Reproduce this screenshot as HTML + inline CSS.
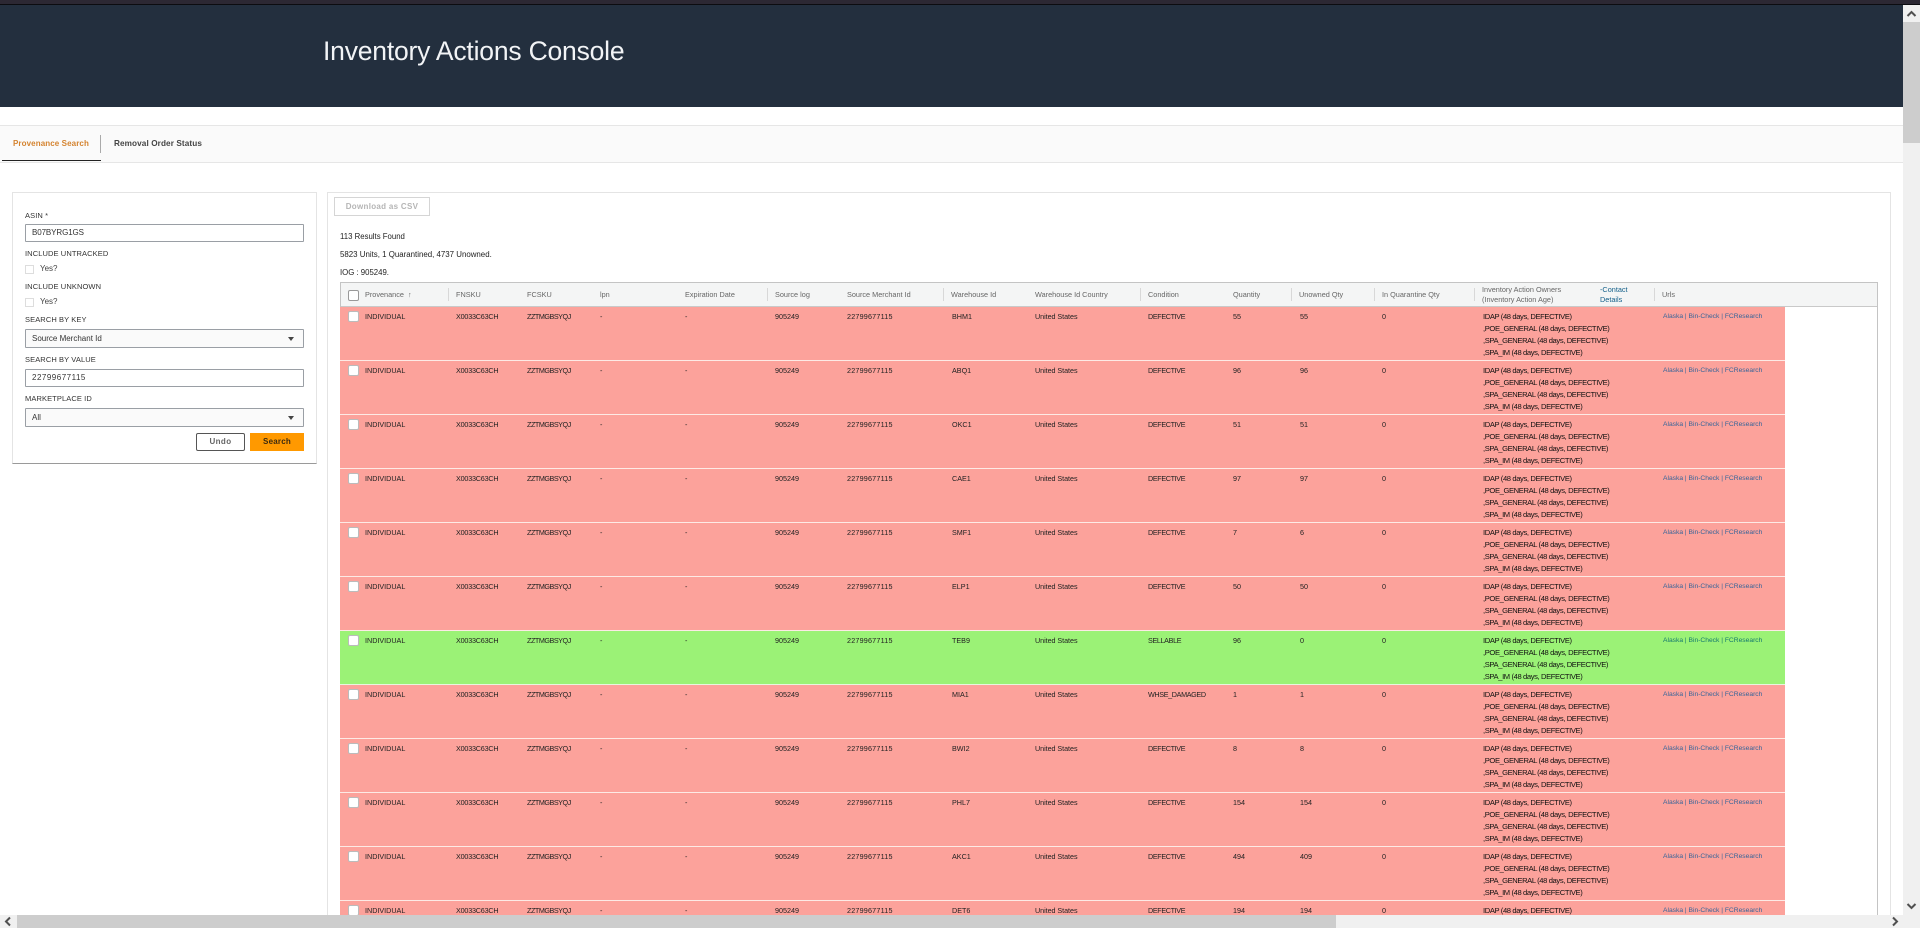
<!DOCTYPE html>
<html lang="en"><head><meta charset="utf-8"><title>Inventory Actions Console</title>
<style>
html,body{margin:0;padding:0;background:#fff;width:1920px;height:928px;overflow:hidden;font-family:"Liberation Sans",sans-serif}
div,span,i,b,a,u{position:absolute;white-space:nowrap;font-style:normal;font-weight:normal;text-decoration:none;display:block}
#w{left:0;top:0;width:1920px;height:928px;overflow:hidden;background:#fff}
.l{left:25px;font-size:7.5px;color:#333;letter-spacing:.1px;line-height:10px}
.in{left:25px;width:277px;height:16px;border:1px solid #9a9fa5;border-radius:1px;background:#fff;font-size:8px;line-height:16px;color:#333;text-indent:6px}
.sel{height:17px;line-height:17px;background:#fafafa}
.ck{left:25px;width:7px;height:7px;border:1px solid #ddd;background:#fff}
.y{left:40px;font-size:8px;color:#444;line-height:10px}
.tri{left:288px;width:0;height:0;border-left:3px solid transparent;border-right:3px solid transparent;border-top:4px solid #444}
.h{top:283px;font-size:7.3px;color:#666;line-height:24px}
.sep{top:288px;width:1px;height:13px;background:#d8d8d8}
.r{left:340px;width:1445px;height:53px;background:#fca29b;border-bottom:1px solid #fdeae5}
.g{background:#9bf276;border-bottom-color:#e6f7de}
.r span{top:5px;font-size:7.2px;line-height:10px;color:#222}
.r i{left:8px;top:4px;width:9px;height:9px;background:#fff;border:1px solid #bbb;border-radius:2px}
.c1{left:25px}.c2{left:116px;letter-spacing:-.2px}.c3{left:187px;letter-spacing:-.45px}.c4{left:260px}.c5{left:345px}.c6{left:435px}.c7{left:507px;letter-spacing:.2px}.c8{left:612px}.c9{left:695px;letter-spacing:-.05px}.c10{left:808px;letter-spacing:-.35px}.c11{left:893px}.c12{left:960px}.c13{left:1042px}
.r .o{left:1143px;top:4px;font-size:7.6px;letter-spacing:-.38px;line-height:12px;color:#111}
.r .u{left:1323px;color:#36659a;font-size:6.7px}
.g .u{color:#15796e}
</style></head><body>
<div id="w">
<div style="left:0;top:0;width:1920px;height:4px;background:#2c2833"></div>
<div style="left:0;top:4px;width:1920px;height:1px;background:#0c0c10"></div>
<div style="left:0;top:5px;width:1903px;height:102px;background:#232f3e"></div>
<div style="left:323px;top:36px;font-size:26.5px;line-height:30px;color:#f2f4f6;letter-spacing:-.2px">Inventory Actions Console</div>

<div style="left:0;top:125px;width:1903px;height:36px;background:#fafafa;border-top:1px solid #e6e6e6;border-bottom:1px solid #e6e6e6"></div>
<div style="left:13px;top:139px;font-size:8px;line-height:10px;color:#d4832f;letter-spacing:.1px"><b style="position:static;font-weight:bold;color:#d4832f">Provenance Search</b></div>
<div style="left:2px;top:160px;width:99px;height:1px;background:#222"></div>
<div style="left:100px;top:135px;width:1px;height:18px;background:#aaa"></div>
<div style="left:114px;top:139px;font-size:8.2px;line-height:10px;color:#444;letter-spacing:.1px"><b style="position:static;font-weight:bold">Removal Order Status</b></div>

<!-- left panel -->
<div style="left:12px;top:192px;width:303px;height:270px;border:1px solid #e4e4e4;border-bottom:1px solid #9a9a9a"></div>
<div class="l" style="top:211px">ASIN *</div>
<div class="in" style="top:224px;letter-spacing:-.1px">B07BYRG1GS</div>
<div class="l" style="top:249px">INCLUDE UNTRACKED</div>
<div class="ck" style="top:265px"></div><div class="y" style="top:264px">Yes?</div>
<div class="l" style="top:282px">INCLUDE UNKNOWN</div>
<div class="ck" style="top:298px"></div><div class="y" style="top:297px">Yes?</div>
<div class="l" style="top:315px">SEARCH BY KEY</div>
<div class="in sel" style="top:329px">Source Merchant Id</div><div class="tri" style="top:337px"></div>
<div class="l" style="top:355px">SEARCH BY VALUE</div>
<div class="in" style="top:369px;letter-spacing:.5px">22799677115</div>
<div class="l" style="top:394px">MARKETPLACE ID</div>
<div class="in sel" style="top:408px">All</div><div class="tri" style="top:416px"></div>
<div style="left:196px;top:433px;width:47px;height:16px;border:1px solid #555;border-radius:2px;background:#fff;text-align:center;font-size:8px;line-height:16px;color:#666;letter-spacing:.4px"><b style="position:static;font-weight:bold">Undo</b></div>
<div style="left:250px;top:433px;width:54px;height:18px;background:#f90;text-align:center;font-size:8px;line-height:18px;color:#3b2a10;letter-spacing:.2px"><b style="position:static;font-weight:bold">Search</b></div>

<!-- right panel -->
<div style="left:327px;top:192px;width:1562px;height:735px;border:1px solid #e4e4e4"></div>
<div style="left:334px;top:197px;width:94px;height:17px;border:1px solid #d5d5d5;text-align:center;font-size:8px;line-height:17px;color:#b5b5b5;letter-spacing:.3px"><b style="position:static;font-weight:bold">Download as CSV</b></div>
<div style="left:340px;top:232px;font-size:7.8px;line-height:10px;color:#222">113 Results Found</div>
<div style="left:340px;top:250px;font-size:7.9px;line-height:10px;color:#222">5823 Units, 1 Quarantined, 4737 Unowned.</div>
<div style="left:340px;top:268px;font-size:7.8px;line-height:10px;color:#222">IOG : 905249.</div>

<!-- table -->
<div style="left:340px;top:282px;width:1536px;height:644px;border:1px solid #c4c4c4"></div>
<div style="left:341px;top:283px;width:1536px;height:23px;background:#f4f5f5;border-bottom:1px solid #c9c9c9"></div>
<div style="left:348px;top:290px;width:9px;height:9px;background:#fff;border:1px solid #999;border-radius:2px"></div>
<div class="h" style="left:365px">Provenance &nbsp;&#8593;</div><div class="sep" style="left:448px"></div>
<div class="h" style="left:456px">FNSKU</div>
<div class="h" style="left:527px">FCSKU</div>
<div class="h" style="left:600px">lpn</div>
<div class="h" style="left:685px">Expiration Date</div><div class="sep" style="left:767px"></div>
<div class="h" style="left:775px">Source log</div>
<div class="h" style="left:847px">Source Merchant Id</div><div class="sep" style="left:943px"></div>
<div class="h" style="left:951px">Warehouse Id</div>
<div class="h" style="left:1035px">Warehouse Id Country</div><div class="sep" style="left:1140px"></div>
<div class="h" style="left:1148px">Condition</div>
<div class="h" style="left:1233px">Quantity</div><div class="sep" style="left:1291px"></div>
<div class="h" style="left:1299px">Unowned Qty</div><div class="sep" style="left:1374px"></div>
<div class="h" style="left:1382px">In Quarantine Qty</div><div class="sep" style="left:1474px"></div>
<div class="h" style="left:1482px;top:285px;line-height:10px">Inventory Action Owners<br>(Inventory Action Age)</div>
<div class="h" style="left:1600px;top:285px;line-height:10px;color:#14608a">-Contact<br>Details</div><div class="sep" style="left:1654px"></div>
<div class="h" style="left:1662px">Urls</div>

<div class="r" style="top:307px"><i></i><span class="c1">INDIVIDUAL</span><span class="c2">X0033C63CH</span><span class="c3">ZZTMGBSYQJ</span><span class="c4">-</span><span class="c5">-</span><span class="c6">905249</span><span class="c7">22799677115</span><span class="c8">BHM1</span><span class="c9">United States</span><span class="c10">DEFECTIVE</span><span class="c11">55</span><span class="c12">55</span><span class="c13">0</span><span class="o">IDAP (48 days, DEFECTIVE)<br>,POE_GENERAL (48 days, DEFECTIVE)<br>,SPA_GENERAL (48 days, DEFECTIVE)<br>,SPA_IM (48 days, DEFECTIVE)</span><span class="u">Alaska | Bin-Check | FCResearch</span></div>
<div class="r" style="top:361px"><i></i><span class="c1">INDIVIDUAL</span><span class="c2">X0033C63CH</span><span class="c3">ZZTMGBSYQJ</span><span class="c4">-</span><span class="c5">-</span><span class="c6">905249</span><span class="c7">22799677115</span><span class="c8">ABQ1</span><span class="c9">United States</span><span class="c10">DEFECTIVE</span><span class="c11">96</span><span class="c12">96</span><span class="c13">0</span><span class="o">IDAP (48 days, DEFECTIVE)<br>,POE_GENERAL (48 days, DEFECTIVE)<br>,SPA_GENERAL (48 days, DEFECTIVE)<br>,SPA_IM (48 days, DEFECTIVE)</span><span class="u">Alaska | Bin-Check | FCResearch</span></div>
<div class="r" style="top:415px"><i></i><span class="c1">INDIVIDUAL</span><span class="c2">X0033C63CH</span><span class="c3">ZZTMGBSYQJ</span><span class="c4">-</span><span class="c5">-</span><span class="c6">905249</span><span class="c7">22799677115</span><span class="c8">OKC1</span><span class="c9">United States</span><span class="c10">DEFECTIVE</span><span class="c11">51</span><span class="c12">51</span><span class="c13">0</span><span class="o">IDAP (48 days, DEFECTIVE)<br>,POE_GENERAL (48 days, DEFECTIVE)<br>,SPA_GENERAL (48 days, DEFECTIVE)<br>,SPA_IM (48 days, DEFECTIVE)</span><span class="u">Alaska | Bin-Check | FCResearch</span></div>
<div class="r" style="top:469px"><i></i><span class="c1">INDIVIDUAL</span><span class="c2">X0033C63CH</span><span class="c3">ZZTMGBSYQJ</span><span class="c4">-</span><span class="c5">-</span><span class="c6">905249</span><span class="c7">22799677115</span><span class="c8">CAE1</span><span class="c9">United States</span><span class="c10">DEFECTIVE</span><span class="c11">97</span><span class="c12">97</span><span class="c13">0</span><span class="o">IDAP (48 days, DEFECTIVE)<br>,POE_GENERAL (48 days, DEFECTIVE)<br>,SPA_GENERAL (48 days, DEFECTIVE)<br>,SPA_IM (48 days, DEFECTIVE)</span><span class="u">Alaska | Bin-Check | FCResearch</span></div>
<div class="r" style="top:523px"><i></i><span class="c1">INDIVIDUAL</span><span class="c2">X0033C63CH</span><span class="c3">ZZTMGBSYQJ</span><span class="c4">-</span><span class="c5">-</span><span class="c6">905249</span><span class="c7">22799677115</span><span class="c8">SMF1</span><span class="c9">United States</span><span class="c10">DEFECTIVE</span><span class="c11">7</span><span class="c12">6</span><span class="c13">0</span><span class="o">IDAP (48 days, DEFECTIVE)<br>,POE_GENERAL (48 days, DEFECTIVE)<br>,SPA_GENERAL (48 days, DEFECTIVE)<br>,SPA_IM (48 days, DEFECTIVE)</span><span class="u">Alaska | Bin-Check | FCResearch</span></div>
<div class="r" style="top:577px"><i></i><span class="c1">INDIVIDUAL</span><span class="c2">X0033C63CH</span><span class="c3">ZZTMGBSYQJ</span><span class="c4">-</span><span class="c5">-</span><span class="c6">905249</span><span class="c7">22799677115</span><span class="c8">ELP1</span><span class="c9">United States</span><span class="c10">DEFECTIVE</span><span class="c11">50</span><span class="c12">50</span><span class="c13">0</span><span class="o">IDAP (48 days, DEFECTIVE)<br>,POE_GENERAL (48 days, DEFECTIVE)<br>,SPA_GENERAL (48 days, DEFECTIVE)<br>,SPA_IM (48 days, DEFECTIVE)</span><span class="u">Alaska | Bin-Check | FCResearch</span></div>
<div class="r g" style="top:631px"><i></i><span class="c1">INDIVIDUAL</span><span class="c2">X0033C63CH</span><span class="c3">ZZTMGBSYQJ</span><span class="c4">-</span><span class="c5">-</span><span class="c6">905249</span><span class="c7">22799677115</span><span class="c8">TEB9</span><span class="c9">United States</span><span class="c10">SELLABLE</span><span class="c11">96</span><span class="c12">0</span><span class="c13">0</span><span class="o">IDAP (48 days, DEFECTIVE)<br>,POE_GENERAL (48 days, DEFECTIVE)<br>,SPA_GENERAL (48 days, DEFECTIVE)<br>,SPA_IM (48 days, DEFECTIVE)</span><span class="u">Alaska | Bin-Check | FCResearch</span></div>
<div class="r" style="top:685px"><i></i><span class="c1">INDIVIDUAL</span><span class="c2">X0033C63CH</span><span class="c3">ZZTMGBSYQJ</span><span class="c4">-</span><span class="c5">-</span><span class="c6">905249</span><span class="c7">22799677115</span><span class="c8">MIA1</span><span class="c9">United States</span><span class="c10">WHSE_DAMAGED</span><span class="c11">1</span><span class="c12">1</span><span class="c13">0</span><span class="o">IDAP (48 days, DEFECTIVE)<br>,POE_GENERAL (48 days, DEFECTIVE)<br>,SPA_GENERAL (48 days, DEFECTIVE)<br>,SPA_IM (48 days, DEFECTIVE)</span><span class="u">Alaska | Bin-Check | FCResearch</span></div>
<div class="r" style="top:739px"><i></i><span class="c1">INDIVIDUAL</span><span class="c2">X0033C63CH</span><span class="c3">ZZTMGBSYQJ</span><span class="c4">-</span><span class="c5">-</span><span class="c6">905249</span><span class="c7">22799677115</span><span class="c8">BWI2</span><span class="c9">United States</span><span class="c10">DEFECTIVE</span><span class="c11">8</span><span class="c12">8</span><span class="c13">0</span><span class="o">IDAP (48 days, DEFECTIVE)<br>,POE_GENERAL (48 days, DEFECTIVE)<br>,SPA_GENERAL (48 days, DEFECTIVE)<br>,SPA_IM (48 days, DEFECTIVE)</span><span class="u">Alaska | Bin-Check | FCResearch</span></div>
<div class="r" style="top:793px"><i></i><span class="c1">INDIVIDUAL</span><span class="c2">X0033C63CH</span><span class="c3">ZZTMGBSYQJ</span><span class="c4">-</span><span class="c5">-</span><span class="c6">905249</span><span class="c7">22799677115</span><span class="c8">PHL7</span><span class="c9">United States</span><span class="c10">DEFECTIVE</span><span class="c11">154</span><span class="c12">154</span><span class="c13">0</span><span class="o">IDAP (48 days, DEFECTIVE)<br>,POE_GENERAL (48 days, DEFECTIVE)<br>,SPA_GENERAL (48 days, DEFECTIVE)<br>,SPA_IM (48 days, DEFECTIVE)</span><span class="u">Alaska | Bin-Check | FCResearch</span></div>
<div class="r" style="top:847px"><i></i><span class="c1">INDIVIDUAL</span><span class="c2">X0033C63CH</span><span class="c3">ZZTMGBSYQJ</span><span class="c4">-</span><span class="c5">-</span><span class="c6">905249</span><span class="c7">22799677115</span><span class="c8">AKC1</span><span class="c9">United States</span><span class="c10">DEFECTIVE</span><span class="c11">494</span><span class="c12">409</span><span class="c13">0</span><span class="o">IDAP (48 days, DEFECTIVE)<br>,POE_GENERAL (48 days, DEFECTIVE)<br>,SPA_GENERAL (48 days, DEFECTIVE)<br>,SPA_IM (48 days, DEFECTIVE)</span><span class="u">Alaska | Bin-Check | FCResearch</span></div>
<div class="r" style="top:901px;height:14px;overflow:hidden;border-bottom:0"><i></i><span class="c1">INDIVIDUAL</span><span class="c2">X0033C63CH</span><span class="c3">ZZTMGBSYQJ</span><span class="c4">-</span><span class="c5">-</span><span class="c6">905249</span><span class="c7">22799677115</span><span class="c8">DET6</span><span class="c9">United States</span><span class="c10">DEFECTIVE</span><span class="c11">194</span><span class="c12">194</span><span class="c13">0</span><span class="o" style="height:10px;overflow:hidden">IDAP (48 days, DEFECTIVE)</span><span class="u">Alaska | Bin-Check | FCResearch</span></div>

<!-- scrollbars -->
<div style="left:1903px;top:5px;width:17px;height:923px;background:#f0f0f0"></div>
<div style="left:1903px;top:22px;width:17px;height:121px;background:#cdcdcd"></div>
<svg style="position:absolute;left:1903px;top:5px" width="17" height="17"><path d="M4.5 11 L8.5 7 L12.5 11" fill="none" stroke="#505050" stroke-width="2"/></svg>
<svg style="position:absolute;left:1903px;top:898px" width="17" height="17"><path d="M4.5 6 L8.5 10 L12.5 6" fill="none" stroke="#505050" stroke-width="2"/></svg>
<div style="left:0;top:915px;width:1903px;height:13px;background:#f0f0f0"></div>
<div style="left:17px;top:915px;width:1319px;height:13px;background:#cdcdcd"></div>
<svg style="position:absolute;left:0;top:915px" width="17" height="13"><path d="M10 2.5 L6 6.5 L10 10.5" fill="none" stroke="#505050" stroke-width="2"/></svg>
<svg style="position:absolute;left:1886px;top:915px" width="17" height="13"><path d="M7 2.5 L11 6.5 L7 10.5" fill="none" stroke="#505050" stroke-width="2"/></svg>
</div>
</body></html>
